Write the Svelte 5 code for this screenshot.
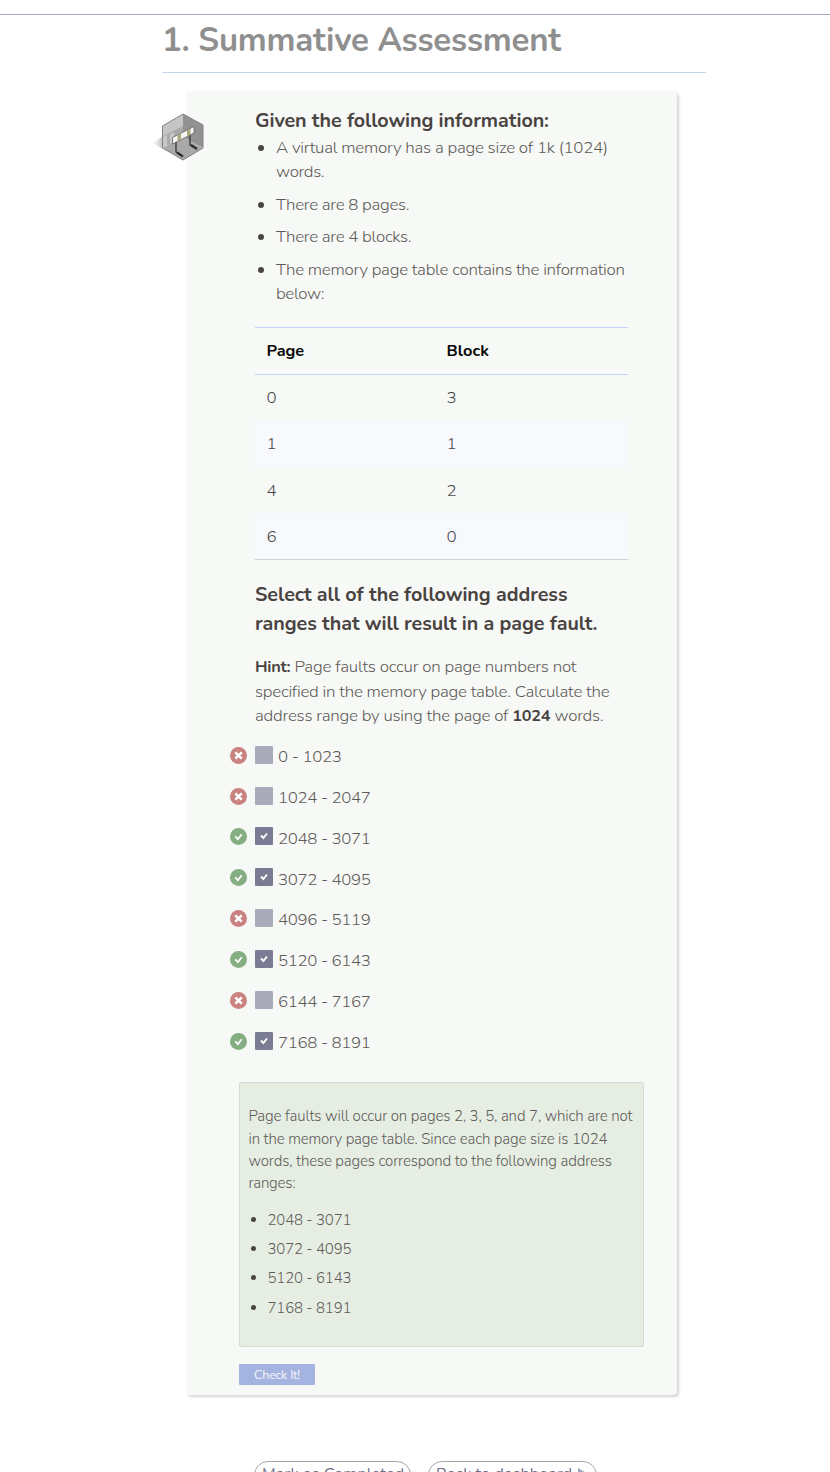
<script>
  const facts = [
    [['A virtual memory has a page size of 1k (1024)', 332], ['words.', 48.5]],
    [['There are 8 pages.', 133.5]],
    [['There are 4 blocks.', 135.5]],
    [['The memory page table contains the information', 349], ['below:', 48.5]]
  ];
  const rows = [[0, 3], [1, 1], [4, 2], [6, 0]];
  const choices = [
    ['0 - 1023', 64, false],
    ['1024 - 2047', 93, false],
    ['2048 - 3071', 93, true],
    ['3072 - 4095', 93, true],
    ['4096 - 5119', 93, false],
    ['5120 - 6143', 93, true],
    ['6144 - 7167', 93, false],
    ['7168 - 8191', 93, true]
  ];
  const explanation = [
    ['Page faults will occur on pages 2, 3, 5, and 7, which are not', 384],
    ['in the memory page table. Since each page size is 1024', 359],
    ['words, these pages correspond to the following address', 363.5],
    ['ranges:', 47]
  ];
  const ranges = ['2048 - 3071', '3072 - 4095', '5120 - 6143', '7168 - 8191'];

  // Tracks a line of text so that it spans the given measure.
  function fit(node, width) {
    const apply = () => {
      node.style.letterSpacing = '0px';
      const natural = node.getBoundingClientRect().width;
      const count = node.textContent.length;
      node.style.letterSpacing = `${(width - natural) / Math.max(1, count - 1)}px`;
    };
    apply();
    document.fonts?.ready.then(apply);
  }
</script>

<div class="page">
  <div class="topbar"></div>
  <h1><span use:fit={399}>1. Summative Assessment</span></h1>

  <section class="card">
    <svg class="badge" width="52" height="50" viewBox="0 0 52 50">
      <defs>
        <linearGradient id="shade" x1="0" x2="1"><stop offset="0" stop-color="#ddd" stop-opacity=".2" /><stop offset="1" stop-color="#bbb" /></linearGradient>
      </defs>
      <path d="M0 31 10 24V37L4 34Z" fill="url(#shade)" />
      <path d="M30 2 9.500 14V36L30 25Z" fill="#c5c5c5" />
      <path d="M10 24 30 14V25L10 36Z" fill="#aaa" />
      <path d="M10 25 14 23V34L10 36ZM17 22 21 20V30L17 32Z" fill="#c8c8c8" />
      <path d="M30 2 50 13V36L30 25Z" fill="#929292" />
      <path d="M30 25 50 36 30 48 10 36Z" fill="#a9a9a9" />
      <path d="M30 2 50 13V36L30 48 9.500 36V14Z" fill="none" stroke="#808080" stroke-width="1" />
      <path d="M23 29V40L28 43M37 22V33L43 36" fill="none" stroke="#333" stroke-width="1.300" />
      <path d="M24 40.500 30 44.500M38 33 44 37" stroke="#2e2e2e" stroke-width="2.200" />
      <path d="M19.500 25.500 41 14.500V21L19.500 32Z" fill="#f5f5f2" stroke="#555" stroke-width=".7" />
      <path d="M24.500 23.500 28 21.500V27.500L24.500 29ZM34 18.500 37.500 16.500V22.500L34 24.500Z" fill="#aaa779" />
    </svg>

    <div class="body">
      <h2 class="first"><span use:fit={294}>Given the following information:</span></h2>
      <ul class="facts">
        {#each facts as fact}
          <li>{#each fact as [text, width]}<div><span use:fit={width}>{text}</span></div>{/each}</li>
        {/each}
      </ul>

      <table>
        <thead><tr><th><span use:fit={37.5}>Page</span></th><th><span use:fit={42.5}>Block</span></th></tr></thead>
        <tbody>
          {#each rows as [page, block]}
            <tr><td>{page}</td><td>{block}</td></tr>
          {/each}
        </tbody>
      </table>

      <h2 class="second">
        <div><span use:fit={312.5}>Select all of the following address</span></div>
        <div><span use:fit={342.5}>ranges that will result in a page fault.</span></div>
      </h2>
      <div class="hint">
        <div><span use:fit={321.5}><b>Hint:</b> Page faults occur on page numbers not</span></div>
        <div><span use:fit={354.5}>specified in the memory page table. Calculate the</span></div>
        <div><span use:fit={348.5}>address range by using the page of <b>1024</b> words.</span></div>
      </div>
    </div>

    <div class="choices">
      {#each choices as [text, width, on]}
        <div class="choice">
          <svg class="mark" width="17" height="17" viewBox="0 0 17 17">
            <circle cx="8.500" cy="8.500" r="8.500" fill={on ? '#85ae83' : '#c98280'} />
            {#if on}
              <path d="M5.200 8.400 7.900 11.200 11.700 6.200" fill="none" stroke="#fff" stroke-width="1.800" />
            {:else}
              <path d="M5.300 5.300 11.700 11.700M11.700 5.300 5.300 11.700" stroke="#fff" stroke-width="2.600" />
            {/if}
          </svg>
          <span class="box" class:on>
            {#if on}
              <svg width="18" height="18" viewBox="0 0 18 18"><path d="M6 8.500 8.400 11 12 6.500" fill="none" stroke="#fff" stroke-width="1.900" /></svg>
            {/if}
          </span>
          <span class="label"><span use:fit={width}>{text}</span></span>
        </div>
      {/each}
    </div>

    <div class="answer">
      {#each explanation as [text, width]}<div class="line"><span use:fit={width}>{text}</span></div>{/each}
      <ul>
        {#each ranges as text}<li><span use:fit={84}>{text}</span></li>{/each}
      </ul>
    </div>
    <button class="check"><span use:fit={46}>Check It!</span></button>
  </section>

  <div class="footer">
    <button class="wide"><span use:fit={142}>Mark as Completed</span></button>
    <button class="back"><span use:fit={136}>Back to dashboard</span><svg width="11" height="12" viewBox="0 0 11 12"><path d="M1 0 11 6 1 12Z" fill="#a0a6bd" /></svg></button>
  </div>
</div>

<style>
  :global(body) { margin: 0; background: #fff; }
  * { box-sizing: border-box; }
  .page {
    height: 1472px; overflow: hidden; position: relative;
    font-family: Nunito, Lato, "Open Sans", sans-serif;
    font-size: 16.900px; font-weight: 300; color: #605b59; white-space: nowrap;
  }
  .topbar { height: 15px; border-bottom: 1px solid #a9abbd; }
  h1 {
    margin: 0 0 0 162px; width: 544px; height: 58px;
    border-bottom: 1px solid #c7d3f3; color: #8f8f8f;
    font-size: 33px; line-height: 51px; font-weight: 700;
  }
  .card {
    position: relative; margin: 18px 0 0 186px; width: 491px; height: 1304px;
    background: #f7f9f6; border-radius: 4px; box-shadow: 2px 2px 3px #d6d6d6;
  }
  .badge { position: absolute; left: -33px; top: 21px; }
  .body { margin-left: 69px; width: 373px; padding-top: 15px; }
  h2 { margin: 0; font-size: 19.700px; line-height: 29px; font-weight: 700; color: #494341; }
  .first { height: 30px; }
  ul { list-style: none; margin: 0; padding: 0; }
  li { position: relative; }
  li::before {
    content: ""; position: absolute; left: 3px; top: 9px;
    width: 6px; height: 6px; border-radius: 50%; background: #494341;
  }
  .facts { height: 191px; }
  .facts li { padding-left: 21px; line-height: 24.400px; margin-bottom: 8.100px; }
  table {
    width: 373px; border-collapse: collapse; table-layout: fixed; color: #484848;
    border-top: 1px solid #c7d3f3; border-bottom: 1px solid #cdd2d8;
  }
  th, td { height: 46.300px; padding: 0 0 0 11.500px; text-align: left; font-weight: 300; }
  th:first-child { width: 180px; }
  th { height: 47px; font-size: 16.300px; font-weight: 700; color: #080808; border-bottom: 1px solid #c7d3f3; }
  tbody tr:nth-child(even) { background: #f8f9fd; }
  .second { margin-top: 19.500px; height: 58px; }
  .hint { margin-top: 17.500px; line-height: 24.500px; height: 74px; }
  b { font-size: 16.300px; font-weight: 700; color: #494341; }
  .choices { margin: 5.500px 0 0 44px; }
  .choice { height: 40.850px; display: flex; align-items: flex-start; padding-top: 11px; }
  .mark { margin-top: 1px; margin-right: 8px; flex: none; }
  .box { width: 18px; height: 18px; background: #a9abbb; border-radius: 1px; flex: none; display: flex; }
  .box.on { background: #797c92; }
  .label { margin-left: 5px; line-height: 24px; margin-top: -.7px; }
  .answer {
    margin: 20.800px 0 0 53px; width: 405px; height: 265px; padding: 22px 9px 0 8.500px;
    background: #e6eee3; border: 1px solid #d6dcd4; border-radius: 2px;
    font-size: 15px;
  }
  .line { line-height: 22.400px; height: 22.400px; }
  .answer ul { margin-top: 13px; }
  .answer li { padding-left: 19px; height: 29.300px; line-height: 24px; }
  .answer li::before { top: 9px; left: 2px; width: 5px; height: 5px; }
  button { font-family: inherit; }
  .check {
    display: block; margin: 17px 0 0 53px; width: 76px; height: 21px; padding: 0;
    border: 0; border-radius: 1px; background: #a5b3e0; color: #f5f6fc; font-size: 12.500px; line-height: 21px;
  }
  .footer { display: flex; gap: 17px; margin: 66px 0 0 254px; }
  .footer button {
    height: 28px; padding: 0 7px; border: 1px solid #a5a5a8; border-radius: 14px;
    background: #fff; color: #6c6c86; font-size: 16px; font-weight: 400; line-height: 24px; display: flex; align-items: center;
  }
  .footer span { margin-top: -3px; }
  .wide { width: 157px; }
  .back { width: 169px; }
  .back svg { margin-left: 5px; margin-bottom: 3px; flex: none; }
</style>
